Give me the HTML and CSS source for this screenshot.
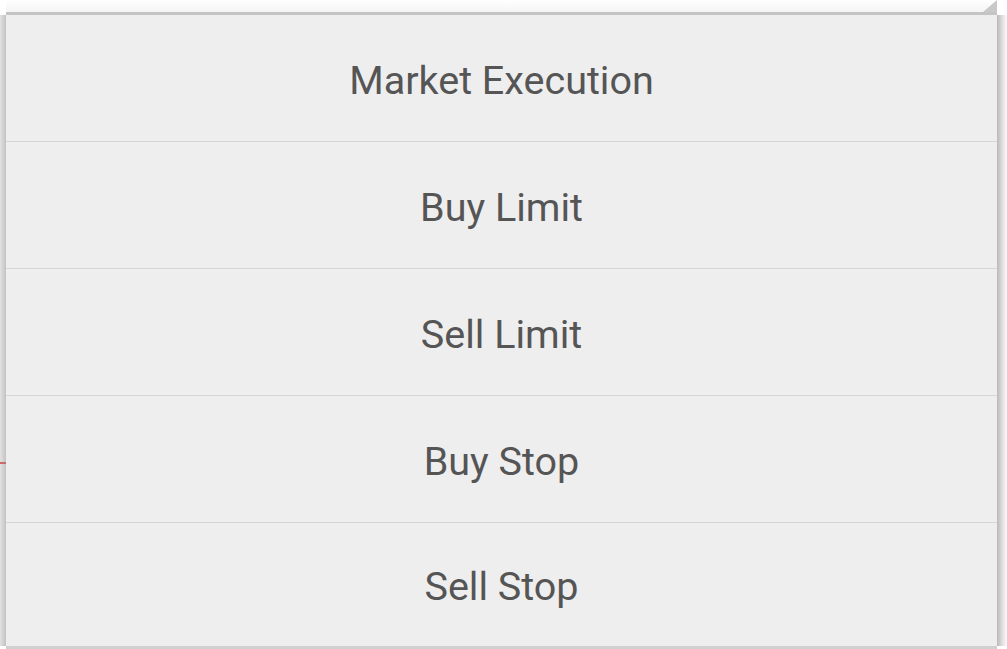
FILE: index.html
```html
<!DOCTYPE html>
<html lang="en">

<head>
  <meta charset="UTF-8">
  <meta name="viewport" content="width=device-width, initial-scale=1.0">
  <title>Order Type</title>
  <link rel="stylesheet" href="styles.css">
</head>

<body>
  <div class="screen">
    <div class="top-bar">
      <div class="fold"></div>
    </div>

    <div class="middle">
      <div class="edge-left">
        <span class="price-tick"></span>
      </div>

      <ul class="menu">
        <li class="menu-item">Market Execution</li>
        <li class="menu-item">Buy Limit</li>
        <li class="menu-item">Sell Limit</li>
        <li class="menu-item">Buy Stop</li>
        <li class="menu-item">Sell Stop</li>
      </ul>

      <div class="edge-right"></div>
    </div>

    <div class="bottom-bar"></div>
  </div>
</body>

</html>
```

FILE: styles.css
```css
* {
  box-sizing: border-box;
  margin: 0;
  padding: 0;
}

body {
  background-color: #fff;
  font-family: Roboto, 'Noto Sans', sans-serif;
  width: 1007px;
  height: 649px;
  overflow: hidden;
}

.screen {
  display: flex;
  flex-direction: column;
  height: 649px;
}

.top-bar {
  height: 15px;
  background: linear-gradient(#fff, #f4f4f4);
  border-bottom: 3px solid #c4c4c4;
  margin-left: 6px;
  margin-right: 10px;
  position: relative;
}

.fold {
  position: absolute;
  right: 0;
  top: 0;
  width: 0;
  height: 0;
  border-left: 14px solid transparent;
  border-bottom: 12px solid #c8c8c8;
}

.middle {
  display: flex;
  flex: 1;
}

.edge-left {
  width: 6px;
  background: linear-gradient(90deg, #e2e2e2, #c2c2c2);
  position: relative;
}

.price-tick {
  position: absolute;
  left: 0;
  top: 447px;
  width: 6px;
  height: 2px;
  background: #c86a6a;
}

.menu {
  list-style: none;
  flex: 1;
  background: #eeeeee;
  display: flex;
  flex-direction: column;
}

.menu-item {
  height: 127px;
  display: flex;
  align-items: center;
  justify-content: center;
  border-bottom: 1px solid #d5d5d5;
  font-size: 39.5px;
  color: #555;
  padding-top: 4px;
}

.menu-item:last-child {
  border-bottom: none;
  flex: 1;
}

.edge-right {
  width: 10px;
  background: linear-gradient(90deg, #b8b8b8, #e4e4e4 60%, #fafafa);
}

.bottom-bar {
  height: 3px;
  margin-left: 6px;
  margin-right: 10px;
  background: #d0d0d0;
}
```
